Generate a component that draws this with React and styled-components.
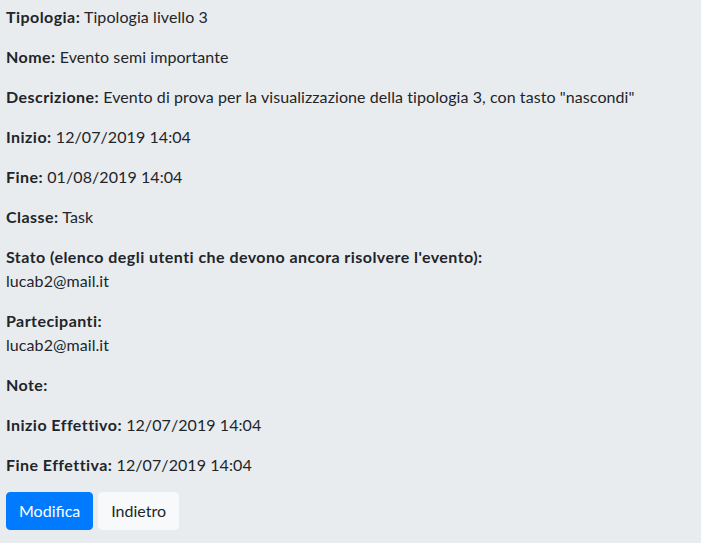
import React from 'react';
import styled, { createGlobalStyle } from 'styled-components';

const GlobalStyle = createGlobalStyle`
  html, body {
    margin: 0;
    background-color: #e9ecef;
  }
  body {
    font-family: Lato, "Noto Sans", sans-serif;
    font-size: 16px;
    line-height: 1.5;
    color: #212529;
  }
`

const Page = styled.div`
  padding: 5px 6px;
  min-height: 100vh;
  box-sizing: border-box;
`

const Field = styled.p`
  margin: 0 0 16px;
  letter-spacing: 0.08px;
`

const Label = styled.b`
  font-weight: 700;
  letter-spacing: 0.45px;
`

const Actions = styled.div`
  display: flex;
  gap: 5px;
  margin-top: -1px;
`

const Button = styled.button`
  font-family: inherit;
  font-size: 16px;
  line-height: 1.5;
  padding: 6px 12px;
  border-radius: 4px;
  border: 1px solid ${props => props.primary ? '#007bff' : '#f8f9fa'};
  background-color: ${props => props.primary ? '#007bff' : '#f8f9fa'};
  color: ${props => props.primary ? '#fff' : '#212529'};
  cursor: pointer;
`

const fields = [
  { label: 'Tipologia:', value: 'Tipologia livello 3' },
  { label: 'Nome:', value: 'Evento semi importante' },
  { label: 'Descrizione:', value: 'Evento di prova per la visualizzazione della tipologia 3, con tasto "nascondi"' },
  { label: 'Inizio:', value: '12/07/2019 14:04' },
  { label: 'Fine:', value: '01/08/2019 14:04' },
  { label: 'Classe:', value: 'Task' },
  { label: "Stato (elenco degli utenti che devono ancora risolvere l'evento):", value: 'lucab2@mail.it', block: true },
  { label: 'Partecipanti:', value: 'lucab2@mail.it', block: true },
  { label: 'Note:', value: '' },
  { label: 'Inizio Effettivo:', value: '12/07/2019 14:04' },
  { label: 'Fine Effettiva:', value: '12/07/2019 14:04' },
];

const App = () => {
  return (
    <Page>
      <GlobalStyle />
      {fields.map(f => (
        <Field key={f.label}>
          <Label>{f.label}</Label>
          {f.block ? <br /> : ' '}
          {f.value}
        </Field>
      ))}
      <Actions>
        <Button primary>Modifica</Button>
        <Button>Indietro</Button>
      </Actions>
    </Page>
  );
};

export default App;
